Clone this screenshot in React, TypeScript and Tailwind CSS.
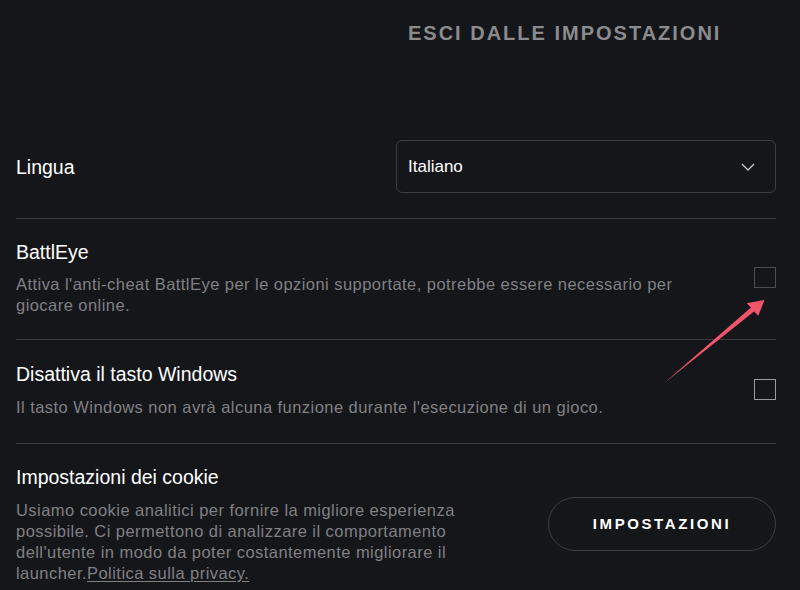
import React from "react";

function Checkbox({ active = false }: { active?: boolean }) {
  return (
    <div
      className={`w-[22px] h-[21px] shrink-0 border ${
        active ? "border-[#9a9a9c]" : "border-[#4d4d50]"
      }`}
    />
  );
}

function Chevron() {
  return (
    <svg width="14" height="8" viewBox="0 0 14 8" fill="none">
      <path d="M1 1l6 6 6-6" stroke="#c9c9cb" strokeWidth="1.3" />
    </svg>
  );
}

export default function App() {
  return (
    <div
      className="relative h-[590px] overflow-hidden bg-[#15161a] pl-4 pr-6 text-white"
      style={{ fontFamily: '"Liberation Sans", Arial, sans-serif' }}
    >
      {/* Header */}
      <div className="grid grid-cols-[1fr_380px] pt-[19px] pb-[72px]">
        <div />
        <div className="pl-[12px] text-[20px] leading-7 font-bold tracking-[2px] text-[#8b8b8d]">
          ESCI DALLE IMPOSTAZIONI
        </div>
      </div>

      {/* Lingua */}
      <div className="grid grid-cols-[1fr_380px] items-center pt-[21px] pb-[25px] border-b border-[#3b3b3e]">
        <div className="text-[19.5px] leading-[26px]">Lingua</div>
        <div className="h-[53px] rounded-md border border-[#3d3e42] flex items-center justify-between pl-[11px] pr-[20px]">
          <span className="text-[17px]">Italiano</span>
          <Chevron />
        </div>
      </div>

      {/* BattlEye */}
      <div className="flex items-center gap-10 pt-[20px] pb-[23px] border-b border-[#3b3b3e]">
        <div className="flex-1">
          <div className="text-[19.5px] leading-[26px]">BattlEye</div>
          <p className="mt-[9px] text-[16.5px] leading-[21px] tracking-[0.45px] text-[#808083]">
            Attiva l'anti-cheat BattlEye per le opzioni supportate, potrebbe essere necessario per giocare online.
          </p>
        </div>
        <Checkbox />
      </div>

      {/* Tasto Windows */}
      <div className="flex items-center gap-10 pt-[21px] pb-[25px] border-b border-[#3b3b3e]">
        <div className="flex-1">
          <div className="text-[19.5px] leading-[26px]">Disattiva il tasto Windows</div>
          <p className="mt-[10px] text-[16.5px] leading-[21px] tracking-[0.45px] text-[#808083]">
            Il tasto Windows non avrà alcuna funzione durante l'esecuzione di un gioco.
          </p>
        </div>
        <Checkbox active />
      </div>

      {/* Cookie */}
      <div className="flex items-center justify-between pt-[20px] pb-[24px]">
        <div className="w-[470px]">
          <div className="text-[19.5px] leading-[26px]">Impostazioni dei cookie</div>
          <p className="mt-[10px] text-[16.5px] leading-[21px] tracking-[0.45px] text-[#808083]">
            Usiamo cookie analitici per fornire la migliore esperienza possibile. Ci permettono di analizzare il
            comportamento dell'utente in modo da poter costantemente migliorare il launcher.
            <a className="underline underline-offset-2">Politica sulla privacy.</a>
          </p>
        </div>
        <button className="w-[228px] h-[54px] rounded-full border border-[#3d3e42] text-[15px] font-bold tracking-[2.6px] text-white">
          IMPOSTAZIONI
        </button>
      </div>

      {/* annotation arrow */}
      <svg className="absolute left-0 top-0 pointer-events-none" width="800" height="590">
        <polygon
          points="663,384 750.9,307.6 746.7,303.3 764.5,300 758.3,315.7 754.1,311.4"
          fill="#f2546c"
        />
      </svg>
    </div>
  );
}
